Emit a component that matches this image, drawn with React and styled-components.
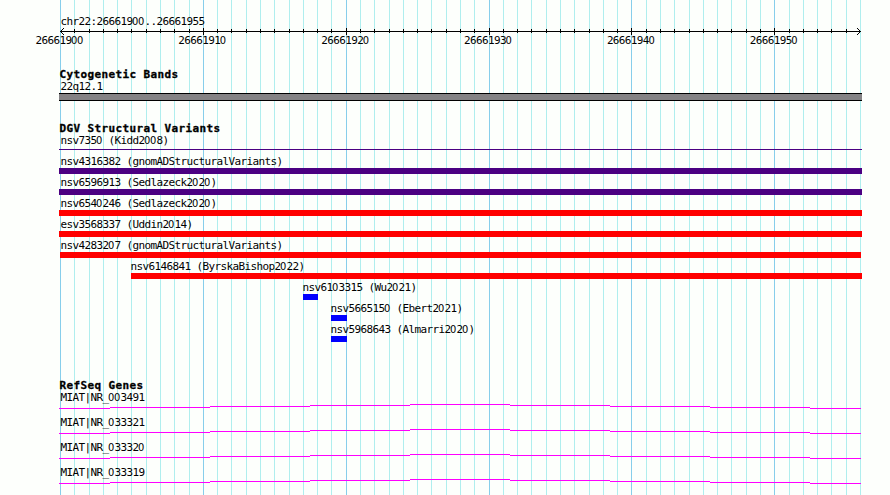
import styled, { createGlobalStyle } from "styled-components";

const GlobalStyle = createGlobalStyle`
  body {
    margin: 0;
    background-color: #fdfffc;
  }
`;

const Container = styled.div`
  position: relative;
  width: 890px;
  height: 495px;
  overflow: hidden;
  background-color: #fdfffc;
  color: #000;
`;

const GridLayer = styled.svg`
  position: absolute;
  top: 0;
  left: 0;
  shape-rendering: crispEdges;
`;

const Content = styled.div`
  position: relative;
  display: flex;
  flex-direction: column;
  padding: 0 28px 0 59px;
`;

const Region = styled.div`
  height: 11px;
  padding-top: 16px;
`;

const Text = styled.div`
  height: 12px;
  margin-left: -0.5px;
  padding-left: ${(props) => props.$indent ?? 2}px;
  font-family: "DejaVu Sans Mono", monospace;
  font-size: 11px;
  line-height: 12px;
  letter-spacing: -0.623px;
  white-space: pre;
`;

const Zero = styled.span`
  display: inline-block;
  width: 6px;
  height: 12px;
  font-family: "DejaVu Sans", sans-serif;
  font-stretch: condensed;
  letter-spacing: 0;
  text-indent: -0.5px;
  vertical-align: top;
`;

const Heading = styled.h2`
  margin: 0;
  height: 12px;
  padding-top: 1px;
  padding-left: 0.5px;
  font-family: "DejaVu Sans Mono", monospace;
  font-size: 11px;
  font-weight: bold;
  line-height: 12px;
  letter-spacing: 0.377px;
  white-space: pre;
  -webkit-text-stroke: 0.3px #000;
`;

const Axis = styled.svg`
  display: block;
  height: 8px;
  shape-rendering: crispEdges;
  overflow: visible;
`;

const TickLabels = styled.div`
  display: grid;
  grid-template-columns: repeat(5, 142.857px) 48px;
  height: 12px;
  margin-left: -23px;
`;

const Section = styled.section`
  margin-top: ${(props) => props.$gap}px;
`;

const Band = styled.div`
  box-sizing: border-box;
  width: 803px;
  height: 8px;
  border: solid #000;
  border-width: 1px 0;
  background-color: #848284;
`;

const Variant = styled.div`
  height: 21px;
  margin-left: ${(props) => props.$start}px;
`;

const Bar = styled.div`
  width: ${(props) => props.$width}px;
  height: ${(props) => (props.$thin ? 1 : 6)}px;
  margin-top: ${(props) => (props.$thin ? 2 : 0)}px;
  margin-left: ${(props) => props.$offset ?? 0}px;
  background-color: ${(props) => props.$color};
`;

const Gene = styled.div`
  height: 25px;
`;

const Intron = styled.svg`
  display: block;
  shape-rendering: crispEdges;
`;

const positions = Array.from({ length: 57 }, (_, i) =>
  Math.round(60 + (i * 800) / 56)
);

const ticks = ["26661900", "26661910", "26661920", "26661930", "26661940", "26661950"];

const variants = [
  { name: "nsv7350 (Kidd2008)", start: 0, width: 803, color: "#4b0082", thin: true },
  { name: "nsv4316382 (gnomADStructuralVariants)", start: 0, width: 803, color: "#4b0082" },
  { name: "nsv6596913 (Sedlazeck2020)", start: 0, width: 803, color: "#4b0082" },
  { name: "nsv6540246 (Sedlazeck2020)", start: 0, width: 803, color: "#ff0000" },
  { name: "esv3568337 (Uddin2014)", start: 0, width: 803, color: "#ff0000" },
  { name: "nsv4283207 (gnomADStructuralVariants)", start: 0, offset: 1, width: 801, color: "#ff0000" },
  { name: "nsv6146841 (ByrskaBishop2022)", start: 72, indent: 0, width: 731, color: "#ff0000" },
  { name: "nsv6103315 (Wu2021)", start: 244, indent: 0, width: 15, color: "#0000ff" },
  { name: "nsv5665150 (Ebert2021)", start: 272, indent: 0, width: 16, color: "#0000ff" },
  { name: "nsv5968643 (Almarri2020)", start: 272, indent: 0, width: 16, color: "#0000ff" },
];

const genes = ["MIAT|NR_003491", "MIAT|NR_033321", "MIAT|NR_033320", "MIAT|NR_033319"];

// [x, y, width]
const steps = [
  [0, 4, 51],
  [51, 3, 100],
  [151, 2, 100],
  [251, 1, 100],
  [351, 0, 100],
  [451, 1, 100],
  [551, 2, 100],
  [651, 3, 100],
  [751, 4, 51],
];

// the label font has an open zero
const Label = ({ children, indent }) => (
  <Text $indent={indent}>
    {children
      .split(/(0)/)
      .map((part, i) => (part === "0" ? <Zero key={i}>0</Zero> : part))}
  </Text>
);

const Grid = () => (
  <GridLayer width="890" height="495">
    {positions.map((x, i) => (
      <rect
        key={x}
        x={x}
        y="0"
        width="1"
        height="495"
        fill={i % 10 === 0 ? "#87ceeb" : "#afeeee"}
      />
    ))}
  </GridLayer>
);

const Ruler = () => (
  <>
    <Axis width="803">
      <rect x="1" y="4" width="801" height="1" />
      {positions.slice(1, -1).map((x, i) =>
        (i + 1) % 10 === 0 ? (
          <rect key={x} x={x - 59} y="1" width="1" height="7" />
        ) : (
          <rect key={x} x={x - 59} y="2" width="1" height="4" />
        )
      )}
      {[1, 2, 3].map((d) => (
        <g key={d}>
          <rect x={1 + d} y={4 - d} width="1" height="1" />
          <rect x={1 + d} y={4 + d} width="1" height="1" />
          <rect x={801 - d} y={4 - d} width="1" height="1" />
          <rect x={801 - d} y={4 + d} width="1" height="1" />
        </g>
      ))}
    </Axis>
    <TickLabels>
      {ticks.map((tick) => (
        <Label key={tick} indent={0}>
          {tick}
        </Label>
      ))}
    </TickLabels>
  </>
);

const App = () => {
  return (
    <>
      <GlobalStyle />
      <Container>
        <Grid />
        <Content>
          <Region>
            <Label>chr22:26661900..26661955</Label>
          </Region>
          <Ruler />
          <Section $gap={21}>
            <Heading>Cytogenetic Bands</Heading>
            <Label>22q12.1</Label>
            <Band />
          </Section>
          <Section $gap={21}>
            <Heading>DGV Structural Variants</Heading>
            {variants.map((v) => (
              <Variant key={v.name} $start={v.start}>
                <Label indent={v.indent}>{v.name}</Label>
                <Bar
                  $width={v.width}
                  $offset={v.offset}
                  $color={v.color}
                  $thin={v.thin}
                />
              </Variant>
            ))}
          </Section>
          <Section $gap={34}>
            <Heading>RefSeq Genes</Heading>
            {genes.map((gene) => (
              <Gene key={gene}>
                <Label>{gene}</Label>
                <Intron width="803" height="5">
                  {steps.map(([x, y, width]) => (
                    <rect key={x} x={x} y={y} width={width} height="1" fill="#ff00ff" />
                  ))}
                </Intron>
              </Gene>
            ))}
          </Section>
        </Content>
      </Container>
    </>
  );
};

export default App;
